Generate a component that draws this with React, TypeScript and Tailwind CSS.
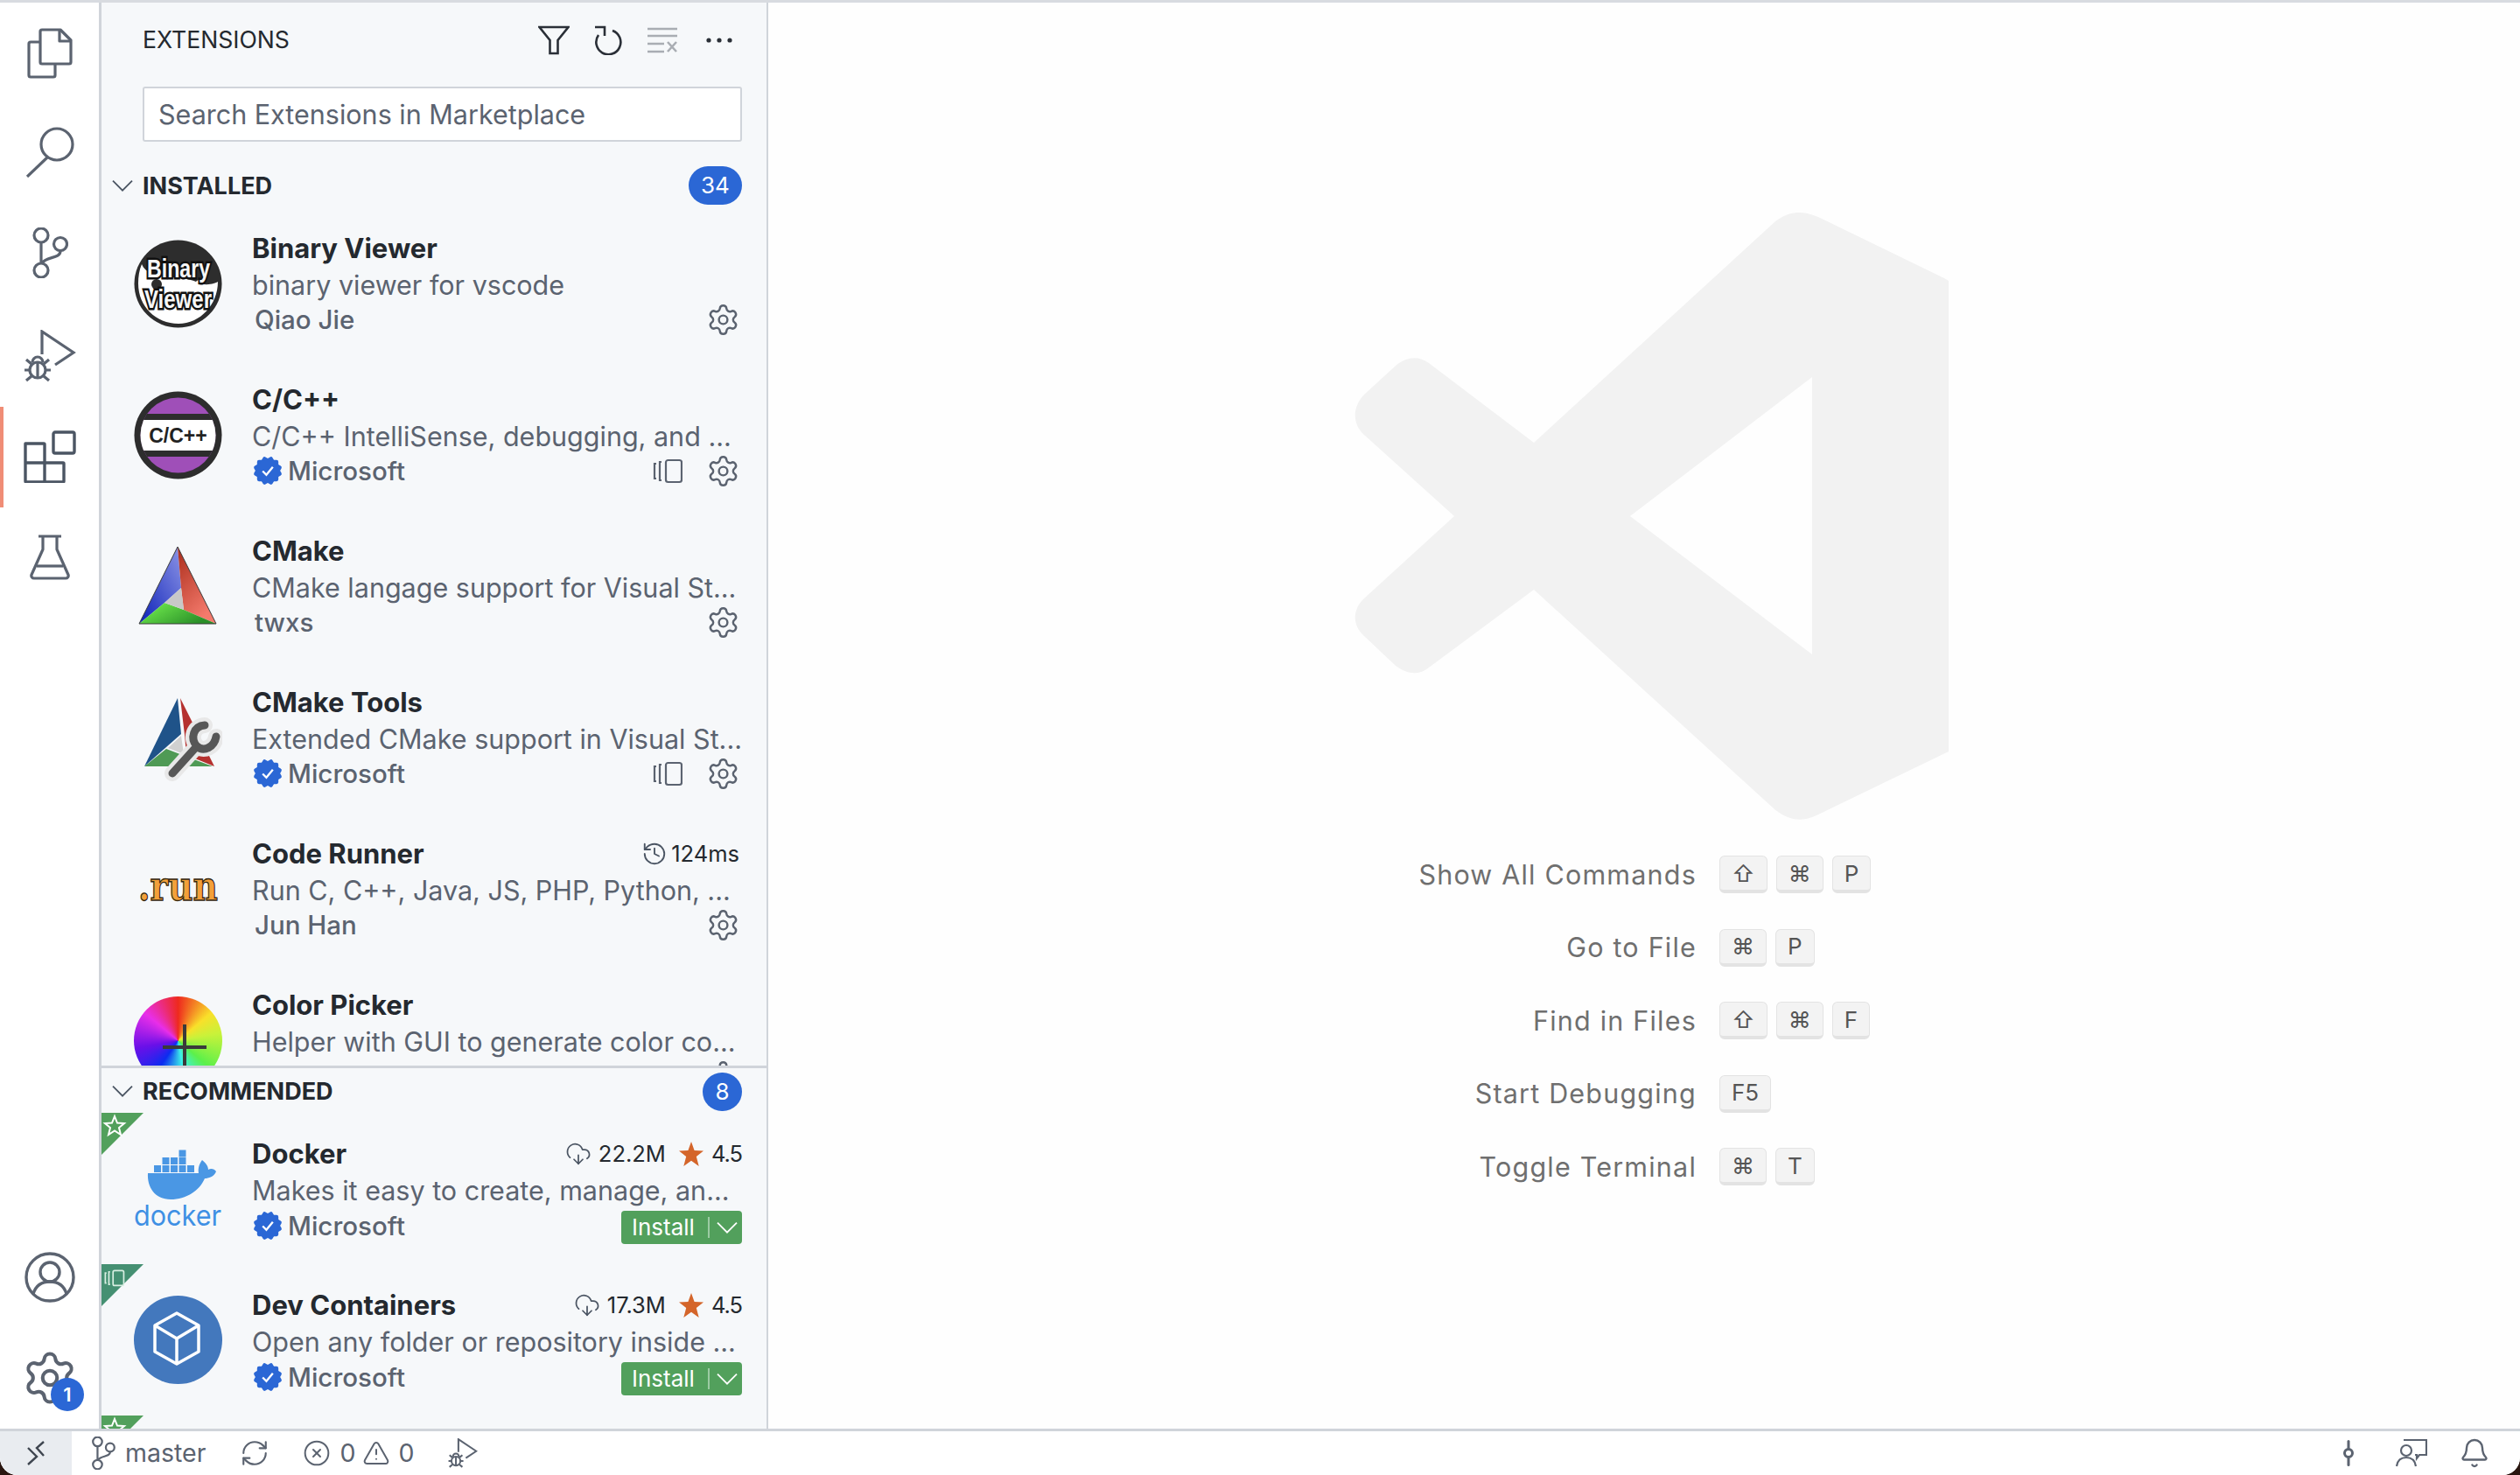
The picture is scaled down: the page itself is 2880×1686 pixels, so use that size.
import type { ReactNode } from "react";
import {
  Bell,
  CircleX,
  CloudDownload,
  GitCommitVertical,
  History,
  RefreshCw,
  Settings,
  TriangleAlert,
} from "lucide-react";

const Chevron = ({ size = 24, color = "#4b5563" }: { size?: number; color?: string }) => (
  <svg width={size} height={size * 0.6} viewBox="0 0 24 14" fill="none" stroke={color} strokeWidth="1.8">
    <path d="M1 1.5 12 12.5 23 1.5" />
  </svg>
);

// activity bar icons
const FilesIcon = () => (
  <svg width="52" height="58" viewBox="0 0 52 58" fill="none" stroke="#5b6370" strokeWidth="3.2" strokeLinejoin="round">
    <path d="M15 4a2 2 0 0 1 2-2h21l12 12v25a2 2 0 0 1-2 2H17a2 2 0 0 1-2-2Z" />
    <path d="M37 2v13h13" />
    <path d="M15 16H4a2 2 0 0 0-2 2v36a2 2 0 0 0 2 2h26a2 2 0 0 0 2-2V41" />
  </svg>
);
const SearchIcon = () => (
  <svg width="56" height="58" viewBox="0 0 56 58" fill="none" stroke="#5b6370" strokeWidth="3.2">
    <circle cx="36" cy="20" r="18" />
    <path d="M25 35 2 57" />
  </svg>
);
const BranchIcon = ({ w = 42, h = 58, sw = 3.2 }: { w?: number; h?: number; sw?: number }) => (
  <svg width={w} height={h} viewBox="0 0 42 58" fill="none" stroke="#5b6370" strokeWidth={sw}>
    <circle cx="11" cy="9" r="8" />
    <circle cx="11" cy="49" r="8" />
    <circle cx="33" cy="19" r="7.5" />
    <path d="M11 17v24M33 27c0 9-17 6-21 14" />
  </svg>
);
const DebugIcon = ({ w = 60, h = 60, sw = 3.2 }: { w?: number; h?: number; sw?: number }) => (
  <svg width={w} height={h} viewBox="0 0 60 60" fill="none" stroke="#5b6370" strokeWidth={sw}>
    <path d="M21 28V2l36 24-21 14" />
    <circle cx="16" cy="46" r="9" />
    <path d="M10 37a6 6 0 0 1 12 0M7 46H1M31 46h-6M9 53l-6 5M23 53l6 5M9 39l-6-5M23 39l6-5M16 37v18" />
  </svg>
);
const ExtensionsIcon = () => (
  <svg width="60" height="60" viewBox="0 0 60 60" fill="none" stroke="#4b5563" strokeWidth="3.4" strokeLinejoin="round">
    <rect x="34" y="2" width="24" height="24" rx="2" />
    <path d="M2 15h21a1 1 0 0 1 1 1v21h21a1 1 0 0 1 1 1v20a1 1 0 0 1-1 1H3a1 1 0 0 1-1-1Z" />
    <path d="M2 37h22M24 37v22" />
  </svg>
);
const FlaskIcon = () => (
  <svg width="46" height="52" viewBox="0 0 46 52" fill="none" stroke="#5b6370" strokeWidth="3.2" strokeLinejoin="round">
    <path d="M10 2h26M15 2v15L2 46a3 3 0 0 0 3 4h36a3 3 0 0 0 3-4L31 17V2" />
    <path d="M8 36h30" />
  </svg>
);
const AccountIcon = () => (
  <svg width="58" height="58" viewBox="0 0 58 58" fill="none" stroke="#5b6370" strokeWidth="3.4">
    <circle cx="29" cy="29" r="27" />
    <circle cx="29" cy="23" r="11" />
    <path d="M10 48c3-10 10-14 19-14s16 4 19 14" />
  </svg>
);

// sidebar toolbar
const FilterIcon = () => (
  <svg width="36" height="34" viewBox="0 0 36 34" fill="none" stroke="#2a2f37" strokeWidth="2.6">
    <path d="M1.5 2h33L22.500 17v15h-9V17Z" />
  </svg>
);
const RefreshIcon = () => (
  <svg width="32" height="34" viewBox="0 0 32 34" fill="none" stroke="#2a2f37" strokeWidth="2.6">
    <path d="M21 6a14 14 0 1 1-16 5" />
    <path d="M1 2h11v10" />
  </svg>
);
const ClearIcon = () => (
  <svg width="36" height="30" viewBox="0 0 36 30" fill="none" stroke="#a9adb3" strokeWidth="2.6">
    <path d="M1 2h34M1 10h34M1 19h19M1 28h19M24 17l10 11M34 17 24 28" />
  </svg>
);
const MoreIcon = () => (
  <svg width="30" height="6" viewBox="0 0 30 6" fill="#2a2f37">
    <circle cx="3" cy="3" r="2.6" />
    <circle cx="15" cy="3" r="2.6" />
    <circle cx="27" cy="3" r="2.6" />
  </svg>
);

const Verified = () => (
  <svg width="34" height="36" viewBox="0 0 32 34" className="ml-[1px] shrink-0">
    <g fill="#2b67d5">
      <rect x="4.500" y="5.500" width="23" height="23" rx="2" />
      <rect x="4.500" y="5.500" width="23" height="23" rx="2" transform="rotate(30 16 17)" />
      <rect x="4.500" y="5.500" width="23" height="23" rx="2" transform="rotate(60 16 17)" />
    </g>
    <path d="M10.500 17.500 14.500 21.500 21.500 13" fill="none" stroke="#fff" strokeWidth="2.2" />
  </svg>
);

const SyncIgnored = ({ color = "#5b6370", size = 34 }: { color?: string; size?: number }) => (
  <svg width={size} height={size} viewBox="0 0 34 34" fill="none" stroke={color} strokeWidth="2.200">
    <rect x="15" y="5" width="18" height="25" rx="2.500" />
    <path d="M4 9H2v17h2M10 7H8v21h2" />
  </svg>
);

const RatingStar = () => (
  <svg width="28" height="28" viewBox="0 0 28 28" className="ml-[15px]">
    <path d="M14 0 17.600 10 28 10.500 19.800 17 22.700 28 14 21.800 5.300 28 8.200 17 0 10.500 10.400 10Z" fill="#d4652a" />
  </svg>
);

// extension logos
const BinaryLogo = () => (
  <svg width="101" height="101" viewBox="0 0 101 101">
    <circle cx="50.500" cy="50.500" r="50" fill="#2d2d2d" />
    <path d="M9 28c8 20 46 12 62 20 10 6 22 2 25 0 0 26-20 48-45 48C25 96 5 76 5 50c0-8 1-15 4-22Z" fill="#fff" />
    <circle cx="26" cy="51" r="6" fill="#2d2d2d" />
    <circle cx="75" cy="51" r="5" fill="#fff" />
    <g className="[paint-order:stroke]" fontFamily="'Liberation Sans', sans-serif" fontWeight="700" fontSize="29" fill="#f7f7f7" stroke="#111" strokeWidth="5">
      <text x="15" y="43" textLength="72" lengthAdjust="spacingAndGlyphs">Binary</text>
      <text x="12" y="78" textLength="77" lengthAdjust="spacingAndGlyphs">Viewer</text>
    </g>
  </svg>
);
const CppLogo = () => (
  <svg width="101" height="101" viewBox="0 0 101 101">
    <circle cx="50.500" cy="50.500" r="50" fill="#2d2d2d" />
    <clipPath id="cpp-clip">
      <circle cx="50.500" cy="50.500" r="43" />
    </clipPath>
    <g clipPath="url(#cpp-clip)">
      <rect width="101" height="101" fill="#9f4fb8" />
      <rect y="26" width="101" height="49" fill="#2d2d2d" />
      <rect y="33" width="101" height="35" fill="#fff" />
    </g>
    <text x="50.500" y="59" textAnchor="middle" fontFamily="'Liberation Sans', sans-serif" fontWeight="700" fontSize="23" fill="#222">C/C++</text>
  </svg>
);
const CMakeLogo = () => (
  <svg width="101" height="101" viewBox="0 0 101 101">
    <defs>
      <linearGradient id="cm-b" x1="1" y1="0" x2="0" y2="1">
        <stop offset="0" stopColor="#8d95e6" />
        <stop offset="1" stopColor="#0a1fb8" />
      </linearGradient>
      <linearGradient id="cm-r" x1="0" y1="0" x2="0.500" y2="1">
        <stop offset="0" stopColor="#a92c1a" />
        <stop offset="1" stopColor="#f47a6c" />
      </linearGradient>
      <linearGradient id="cm-g" x1="0" y1="0" x2="1" y2="0.500">
        <stop offset="0.200" stopColor="#69e24a" />
        <stop offset="1" stopColor="#2a8f28" />
      </linearGradient>
    </defs>
    <path d="M50 5 6 93 35 69 54 52Z" fill="url(#cm-b)" />
    <path d="M50 5 54 52 57 77 94 93Z" fill="url(#cm-r)" />
    <path d="M6 93 35 69 57 77 94 93Z" fill="url(#cm-g)" />
    <path d="M54 52 35 69 57 77Z" fill="#c8c8c8" />
    <path d="M6 93 50 5 94 93Z" fill="none" stroke="#3a3a3a" strokeWidth="1" />
  </svg>
);
const CMakeToolsLogo = () => (
  <svg width="101" height="101" viewBox="0 0 101 101">
    <path d="M50 5 12 83 37 61 54 46Z" fill="#1f5389" />
    <path d="M53 5 58 47 60 70 92 83Z" fill="#b5312f" />
    <path d="M12 83 37 63 58 71 90 83Z" fill="#4f9a55" />
    <path d="M54 48 39 62 57 69Z" fill="#d0d0d0" />
    <g fill="none" strokeLinecap="round">
      <path d="M44 91 72 60M81 36C68 37 64 51 72 60 80 67 92 61 94 49" stroke="#e8e8e8" strokeWidth="18" />
      <path d="M44 91 72 60M81 36C68 37 64 51 72 60 80 67 92 61 94 49" stroke="#575757" strokeWidth="9" />
    </g>
  </svg>
);
const RunLogo = () => (
  <svg width="101" height="101" viewBox="0 0 101 101">
    <text x="5" y="63" textLength="91" lengthAdjust="spacingAndGlyphs" fontFamily="'DejaVu Serif', serif" fontWeight="700" fontSize="46" fill="#f3a03a" stroke="#33260f" strokeWidth="1.300">.run</text>
  </svg>
);
const ColorPickerLogo = () => (
  <div className="relative size-[101px] rounded-full bg-[conic-gradient(#ee2a1e_0deg,#f9e02a_50deg,#c8f23a_80deg,#5cf04a_130deg,#3cf0e8_170deg,#0b2cf0_215deg,#6a10e8_260deg,#e82ee8_310deg,#ee2a1e_360deg)]">
    <div className="absolute left-[33px] top-[56px] h-[4px] w-[50px] bg-[#3a3a3a]" />
    <div className="absolute left-[56px] top-[32px] h-[52px] w-[4px] bg-[#3a3a3a]" />
  </div>
);
const DockerLogo = () => (
  <svg width="101" height="92" viewBox="0 0 101 92">
    <g fill="#4a97e4">
      <path d="M16 28H74C73 22 75 17 78 13 82 16 85 20 85 24 88 22 92 23 94 26 92 32 85 34 81 34 75 48 60 58 42 58 24 58 15 44 16 28Z" />
      <rect x="23" y="19" width="8" height="8" />
      <rect x="32.500" y="19" width="8" height="8" />
      <rect x="42" y="19" width="8" height="8" />
      <rect x="51.500" y="19" width="8" height="8" />
      <rect x="61" y="19" width="8" height="8" />
      <rect x="32.500" y="10" width="8" height="8" />
      <rect x="42" y="10" width="8" height="8" />
      <rect x="51.500" y="10" width="8" height="8" />
      <rect x="51.500" y="1.500" width="8" height="8" />
    </g>
    <text x="0" y="88" textLength="100" lengthAdjust="spacingAndGlyphs" fontFamily="Inter, sans-serif" fontWeight="400" fontSize="33" fill="#3f90e4">docker</text>
  </svg>
);
const DevContainersLogo = () => (
  <svg width="101" height="101" viewBox="0 0 101 101">
    <circle cx="50.500" cy="50.500" r="50.500" fill="#4378bd" />
    <path d="M49 20 74 34V64L49 78 24 64V34ZM24 34 49 49 74 34M49 49V78" fill="none" stroke="#fff" strokeWidth="3.500" strokeLinejoin="round" />
  </svg>
);

type Ext = {
  name: string;
  desc: string;
  publisher: string;
  verified?: boolean;
  synced?: boolean;
  logo: ReactNode;
  time?: string;
};

const installed: Ext[] = [
  { name: "Binary Viewer", desc: "binary viewer for vscode", publisher: "Qiao Jie", logo: <BinaryLogo /> },
  { name: "C/C++", desc: "C/C++ IntelliSense, debugging, and ...", publisher: "Microsoft", verified: true, synced: true, logo: <CppLogo /> },
  { name: "CMake", desc: "CMake langage support for Visual St...", publisher: "twxs", logo: <CMakeLogo /> },
  { name: "CMake Tools", desc: "Extended CMake support in Visual St...", publisher: "Microsoft", verified: true, synced: true, logo: <CMakeToolsLogo /> },
  { name: "Code Runner", desc: "Run C, C++, Java, JS, PHP, Python, ...", publisher: "Jun Han", time: "124ms", logo: <RunLogo /> },
  { name: "Color Picker", desc: "Helper with GUI to generate color co...", publisher: "anseki", logo: <ColorPickerLogo /> },
];

const Publisher = ({ ext }: { ext: Ext }) => (
  <div className="flex min-w-0 items-center">
    {ext.verified ? <Verified /> : <span className="w-[3px]" />}
    <span className={`text-[29.500px] font-medium text-[#5b6370] ${ext.verified ? "ml-[6px]" : ""}`}>{ext.publisher}</span>
  </div>
);

const InstalledRow = ({ ext }: { ext: Ext }) => (
  <div className="flex h-[173px] shrink-0 pl-[37px] pr-[28px]">
    <div className="flex w-[101px] shrink-0 items-center justify-center">{ext.logo}</div>
    <div className="ml-[34px] flex min-w-0 flex-1 flex-col pt-[25px]">
      <div className="flex h-[42px] items-center justify-between">
        <span className="text-[31px] font-bold text-[#24292f]">{ext.name}</span>
        {ext.time && (
          <span className="mr-[3px] flex items-center gap-[4px] text-[25.500px] text-[#24292f]">
            <History size={30} strokeWidth={1.5} color="#4b5563" />
            {ext.time}
          </span>
        )}
      </div>
      <div className="h-[42px] truncate text-[30.500px] leading-[42px] text-[#5b6370]">{ext.desc}</div>
      <div className="flex h-[36px] items-center justify-between">
        <Publisher ext={ext} />
        <div className="mr-[2px] flex items-center gap-[27px]">
          {ext.synced && <SyncIgnored />}
          <Settings size={39} strokeWidth={1.5} color="#5b6370" />
        </div>
      </div>
    </div>
  </div>
);

const Ribbon = ({ color, kind }: { color: string; kind: "star" | "sync" }) => (
  <svg width="48" height="48" viewBox="0 0 48 48" className="absolute left-0 top-0">
    <path d="M0 0H48L0 48Z" fill={color} />
    {kind === "star" ? (
      <path d="M15 4l3 7.500 8 .5-6 5 2 8-7-4.500L8 25l2-8-6-5 8-.5Z" fill="none" stroke="#fff" strokeWidth="2" />
    ) : (
      <g transform="translate(3 4) scale(0.68)">
        <rect x="15" y="5" width="18" height="25" rx="2.500" fill="none" stroke="#d9efe2" strokeWidth="2.500" />
        <path d="M4 9H2v17h2M10 7H8v21h2" fill="none" stroke="#d9efe2" strokeWidth="2.500" />
      </g>
    )}
  </svg>
);

const Stats = ({ downloads }: { downloads: string }) => (
  <span className="flex items-center text-[25.500px] text-[#24292f]">
    <CloudDownload size={30} strokeWidth={1.4} color="#4b5563" />
    <span className="ml-[8px]">{downloads}</span>
    <RatingStar />
    <span className="ml-[9px] tracking-[-1px]">4.5</span>
  </span>
);

const InstallButton = () => (
  <div className="mt-[4px] flex h-[38px] w-[138px] items-center rounded-[4px] bg-[#52a05c] pl-[12px] text-[26px] leading-none text-white">
    <span className="w-[87px]">Install</span>
    <span className="h-[24px] w-[2px] bg-[#9ccba3]" />
    <span className="ml-[8px] flex">
      <Chevron size={24} color="#fff" />
    </span>
  </div>
);

const RecommendedRow = ({ name, desc, downloads, logo, ribbon }: { name: string; desc: string; downloads: string; logo: ReactNode; ribbon: ReactNode }) => (
  <div className="relative flex h-[173px] shrink-0 pl-[37px] pr-[28px]">
    {ribbon}
    <div className="flex w-[101px] shrink-0 items-center justify-center">{logo}</div>
    {name && (
      <div className="ml-[34px] flex min-w-0 flex-1 flex-col pt-[26px]">
        <div className="flex h-[42px] items-center justify-between">
          <span className="text-[31px] font-bold text-[#24292f]">{name}</span>
          <Stats downloads={downloads} />
        </div>
        <div className="h-[42px] truncate text-[30.500px] leading-[42px] text-[#5b6370]">{desc}</div>
        <div className="flex h-[38px] items-center justify-between">
          <Publisher ext={{ name, desc, publisher: "Microsoft", verified: true, logo }} />
          <InstallButton />
        </div>
      </div>
    )}
  </div>
);

const SectionHeader = ({ title, count, badgeWidth, className }: { title: string; count: number; badgeWidth: string; className: string }) => (
  <div className={`flex shrink-0 items-center pl-[12px] pr-[28px] ${className}`}>
    <Chevron />
    <span className="ml-[11px] flex-1 text-[27px] font-bold leading-none text-[#24292f]">{title}</span>
    <span className={`flex h-[44px] items-center justify-center rounded-full bg-[#2b67d5] text-[26px] leading-none text-white ${badgeWidth}`}>{count}</span>
  </div>
);

const Key = ({ children }: { children: string }) => (
  <kbd className="flex h-[43px] items-center rounded-[6px] border-[1.5px] border-b-[4px] border-[#e3e3e3] bg-[#f3f3f3] px-[13px] font-[Inter,'DejaVu_Sans',sans-serif] text-[26px] text-[#555555]">
    {children}
  </kbd>
);

const shortcuts = [
  { label: "Show All Commands", keys: ["⇧", "⌘", "P"] },
  { label: "Go to File", keys: ["⌘", "P"] },
  { label: "Find in Files", keys: ["⇧", "⌘", "F"] },
  { label: "Start Debugging", keys: ["F5"] },
  { label: "Toggle Terminal", keys: ["⌘", "T"] },
];

export default function App() {
  return (
    <div className="h-[1686px] w-[2880px] overflow-hidden bg-[#2a1610] font-[Inter,sans-serif]">
      <div className="flex h-full flex-col overflow-hidden rounded-b-[20px] border-t-[3px] border-[#d8dbe0] bg-white">
        <div className="flex min-h-0 flex-1">
          {/* Activity bar */}
          <div className="flex w-[116px] shrink-0 flex-col justify-between border-r-[3px] border-[#d0d4da] bg-white">
            <div>
              <div className="flex h-[116px] items-center justify-center"><FilesIcon /></div>
              <div className="flex h-[115px] items-center justify-center pb-[6px]"><SearchIcon /></div>
              <div className="flex h-[115px] items-center justify-center pb-[6px]"><BranchIcon /></div>
              <div className="flex h-[116px] items-center justify-center"><DebugIcon /></div>
              <div className="flex h-[115px] items-center justify-center border-l-[4px] border-[#f08d76] pb-[2px] pr-[4px]"><ExtensionsIcon /></div>
              <div className="flex h-[115px] items-center justify-center pb-[2px]"><FlaskIcon /></div>
            </div>
            <div>
              <div className="flex h-[114px] items-center justify-center"><AccountIcon /></div>
              <div className="relative flex h-[116px] items-center justify-center">
                <Settings size={66} strokeWidth={1.5} color="#5b6370" />
                <span className="absolute left-[58px] top-[58px] flex size-[38px] items-center justify-center rounded-full bg-[#2b67d5] text-[22px] font-semibold text-white">1</span>
              </div>
            </div>
          </div>

          {/* Sidebar */}
          <div className="flex w-[762px] shrink-0 flex-col overflow-hidden border-r-[2px] border-[#d0d4da] bg-[#f6f8fa]">
            <div className="flex h-[96px] shrink-0 items-center pb-[10px] pl-[47px] pr-[39px]">
              <span className="flex-1 text-[26.600px] text-[#24292f]">EXTENSIONS</span>
              <div className="flex items-center gap-[28px]">
                <FilterIcon />
                <RefreshIcon />
                <ClearIcon />
                <span className="ml-[4px]"><MoreIcon /></span>
              </div>
            </div>
            <div className="ml-[47px] mr-[28px] flex h-[63px] shrink-0 items-center rounded-[3px] border-[2px] border-[#d0d4da] bg-white pl-[16px] text-[30.500px] text-[#5b6370]">
              Search Extensions in Marketplace
            </div>
            <SectionHeader title="INSTALLED" count={34} badgeWidth="w-[61px]" className="mt-[24px] h-[52px]" />
            <div className="flex h-[980px] shrink-0 flex-col overflow-hidden">
              {installed.map((ext) => (
                <InstalledRow key={ext.name} ext={ext} />
              ))}
            </div>
            <SectionHeader title="RECOMMENDED" count={8} badgeWidth="w-[45px]" className="h-[54px] border-t-[3px] border-[#d0d4da] pt-[2px]" />
            <div className="flex min-h-0 flex-1 flex-col overflow-hidden">
              <RecommendedRow
                name="Docker"
                desc="Makes it easy to create, manage, an..."
                downloads="22.2M"
                logo={<DockerLogo />}
                ribbon={<Ribbon color="#52a05c" kind="star" />}
              />
              <RecommendedRow
                name="Dev Containers"
                desc="Open any folder or repository inside ..."
                downloads="17.3M"
                logo={<DevContainersLogo />}
                ribbon={<Ribbon color="#459072" kind="sync" />}
              />
              <RecommendedRow name="" desc="" downloads="" logo={null} ribbon={<Ribbon color="#52a05c" kind="star" />} />
            </div>
          </div>

          {/* Editor watermark */}
          <div className="min-w-0 flex-1 bg-[#fefefe]">
            <svg width="690" height="700" viewBox="0 0 690 700" className="ml-[663px] mt-[238px]">
              <path
                fillRule="evenodd"
                fill="#f2f2f2"
                d="M488 12C505-1 520 0 537 7L681 77 686 80V618L535 691C518 699 503 697 487 684L212 433 92 522C80 532 66 529 54 520L17 485C4 473 5 455 18 443L121 349 18 256C5 244 4 226 17 211L54 177C66 167 80 165 92 174L212 265ZM530 190 322 349 530 507Z"
              />
            </svg>
            <div className="mt-[17px]">
              {shortcuts.map((s) => (
                <div key={s.label} className="flex h-[83.500px] items-center gap-[26px]">
                  <span className="w-[1061px] text-right text-[30.500px] tracking-[1.200px] text-[#6f6f6f]">{s.label}</span>
                  <div className="flex gap-[10px]">
                    {s.keys.map((k) => (
                      <Key key={k}>{k}</Key>
                    ))}
                  </div>
                </div>
              ))}
            </div>
          </div>
        </div>

        {/* Status bar */}
        <div className="flex h-[53px] shrink-0 items-center border-t-[3px] border-[#d0d4da] bg-white text-[28.500px] leading-none text-[#5b6370]">
          <div className="flex h-full w-[82px] items-center justify-center bg-[#e9ecf0]">
            <svg width="20" height="28" viewBox="0 0 20 28" fill="none" stroke="#3f4650" strokeWidth="2.400">
              <path d="M19 1 11 8 19 17M1 8l10 10-10 9" />
            </svg>
          </div>
          <span className="ml-[22px] flex"><BranchIcon w={28} h={38} sw={3.400} /></span>
          <span className="ml-[11px]">master</span>
          <RefreshCw size={34} strokeWidth={1.5} className="ml-[39px]" />
          <CircleX size={32} strokeWidth={1.5} className="ml-[38px]" />
          <span className="ml-[10px]">0</span>
          <TriangleAlert size={32} strokeWidth={1.5} className="ml-[8px]" />
          <span className="ml-[9px]">0</span>
          <span className="ml-[39px] flex"><DebugIcon w={34} h={34} sw={3.600} /></span>
          <div className="ml-auto flex items-center gap-[36px] pr-[34px]">
            <GitCommitVertical size={36} strokeWidth={2} />
            <svg width="36" height="36" viewBox="0 0 36 36" fill="none" stroke="#5b6370" strokeWidth="2.200">
              <path d="M9 3h26v17h-8l-3 4v-4h-2" />
              <circle cx="12" cy="15" r="6" />
              <path d="M1 33c1-7 5-10 11-10s10 3 11 10" />
            </svg>
            <Bell size={36} strokeWidth={1.6} />
          </div>
        </div>
      </div>
    </div>
  );
}
